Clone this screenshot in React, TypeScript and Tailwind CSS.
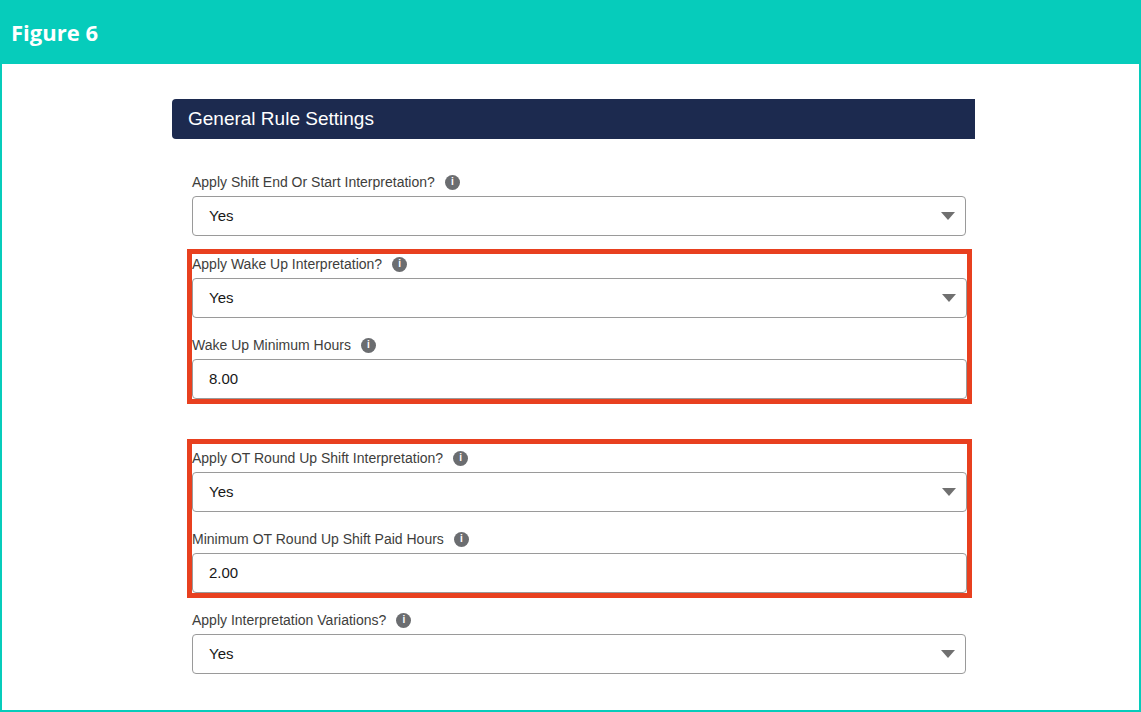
const font = { fontFamily: '"Liberation Sans", Arial, sans-serif' }

function Info() {
  return (
    <span className="ml-[10px] inline-flex h-[15px] w-[15px] items-center justify-center rounded-full bg-[#6b6d70] text-[10px] font-bold leading-none text-white">
      i
    </span>
  )
}

function Field({ label, value, select, first }: { label: string; value: string; select?: boolean; first?: boolean }) {
  return (
    <div className={first ? '' : 'mt-[17px]'}>
      <div className="flex h-5 items-center text-[14px] text-[#3e3e3c]">
        {label}
        <Info />
      </div>
      <div className="mt-1 flex h-10 items-center justify-between rounded-[4px] border border-[#9a9a9a] bg-white pl-4 pr-[10px] text-[15px] text-[#181818]">
        <span>{value}</span>
        {select && (
          <svg width="14" height="9" viewBox="0 0 14 9">
            <path d="M0 0h14L7 8z" fill="#707070" />
          </svg>
        )}
      </div>
    </div>
  )
}

function Highlight({ children, className }: { children: React.ReactNode; className?: string }) {
  return <div className={`-ml-[5px] -mr-[6px] border-[5px] border-[#e8401f] ${className ?? ''}`}>{children}</div>
}

export default function App() {
  return (
    <div className="h-[712px] w-[1141px] bg-white" style={font}>
      <div className="flex h-[64px] items-center bg-[#06ccbb] pl-[11px]">
        <span className="text-[22px] font-bold text-white" style={{ fontFamily: '"Open Sans", sans-serif' }}>
          Figure 6
        </span>
      </div>
      <div className="h-[648px] border-x-2 border-b-2 border-[#06ccbb] pt-[35px]">
        <div className="ml-[170px] w-[803px]">
          <div className="flex h-10 items-center rounded-l-[4px] bg-[#1c2a4f] pl-4 text-[19px] text-white">
            General Rule Settings
          </div>
          <div className="ml-5 mr-[9px] mt-[33px]">
            <Field first label="Apply Shift End Or Start Interpretation?" value="Yes" select />
            <Highlight className="mt-[13px]">
              <Field first label="Apply Wake Up Interpretation?" value="Yes" select />
              <Field label="Wake Up Minimum Hours" value="8.00" />
            </Highlight>
            <Highlight className="mt-[35px] pt-1">
              <Field first label="Apply OT Round Up Shift Interpretation?" value="Yes" select />
              <Field label="Minimum OT Round Up Shift Paid Hours" value="2.00" />
            </Highlight>
            <div className="mt-3">
              <Field first label="Apply Interpretation Variations?" value="Yes" select />
            </div>
          </div>
        </div>
      </div>
    </div>
  )
}
